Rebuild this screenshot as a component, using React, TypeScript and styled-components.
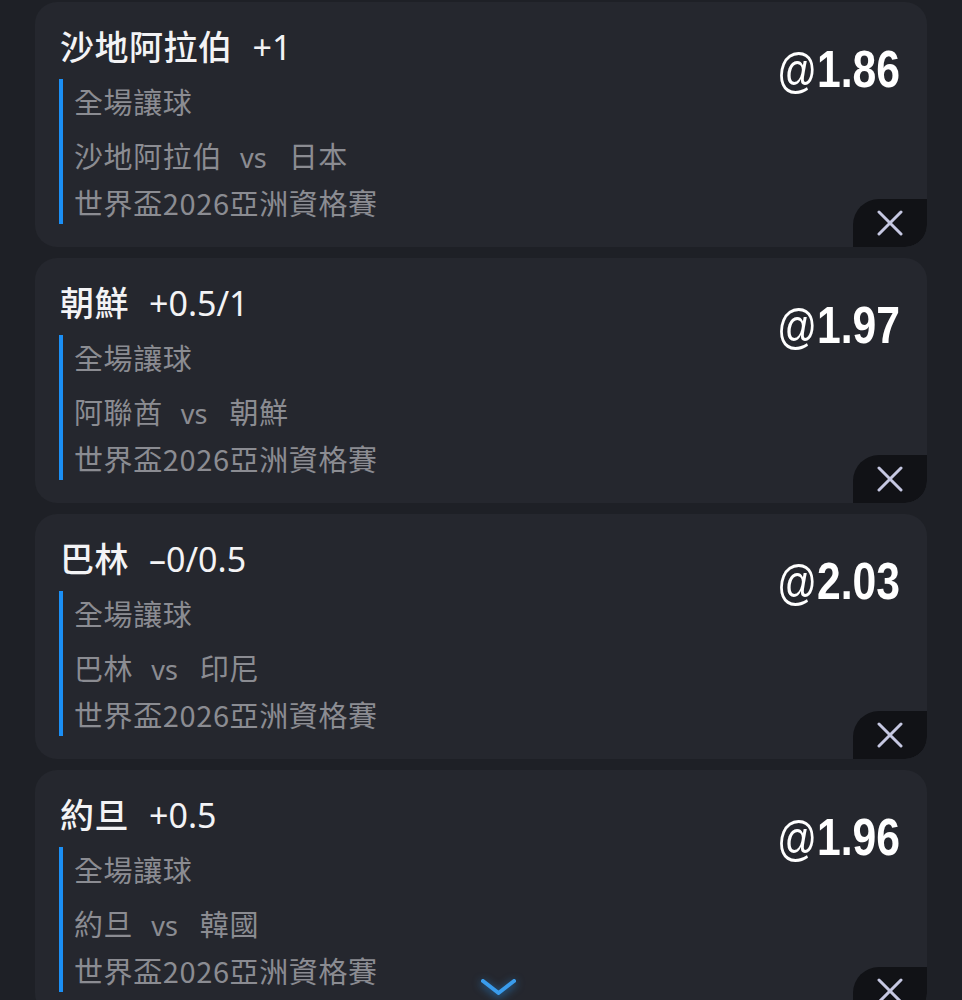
import styled, { createGlobalStyle } from "styled-components";

const GlobalStyle = createGlobalStyle`
  html, body {
    margin: 0;
    padding: 0;
    background: #1e2026;
  }
  body {
    font-family: "Noto Sans CJK TC", "Noto Sans", sans-serif;
  }
`;

const Page = styled.div`
  height: 1000px;
  overflow: hidden;
  position: relative;
  padding: 2px 35px 0 35px;
  box-sizing: border-box;
  display: flex;
  flex-direction: column;
  gap: 11px;
`;

const Card = styled.div`
  position: relative;
  flex: 0 0 auto;
  height: 245px;
  box-sizing: border-box;
  background: #25272e;
  border-radius: 22px;
  padding: 22px 27px 24px 24px;
  display: grid;
  grid-template-columns: 1fr auto;
  align-items: start;
  overflow: hidden;
`;

const Main = styled.div`
  display: flex;
  flex-direction: column;
`;

const Title = styled.div`
  color: #f3f3f5;
  font-size: 34px;
  letter-spacing: 0.5px;
  font-weight: 500;
  line-height: 44px;
  white-space: nowrap;
  padding-left: 1px;
`;

const Handicap = styled.span`
  font-family: "Noto Sans", "Noto Sans CJK TC", sans-serif;
  font-size: 34px;
  font-weight: 400;
  letter-spacing: 0;
  margin-left: 20px;
`;

const Detail = styled.div`
  margin-top: 10px;
  border-left: 4px solid #1b8ff5;
  padding-left: 11px;
  display: flex;
  flex-direction: column;
`;

const Line = styled.div<{ $gap?: number }>`
  color: #8b8c92;
  font-size: 29px;
  letter-spacing: 0.6px;
  line-height: 44px;
  margin-top: ${(p) => p.$gap ?? 0}px;
  white-space: nowrap;
`;

const Vs = styled.span`
  font-family: "Noto Sans", sans-serif;
  font-size: 27px;
  letter-spacing: 0;
  margin: 0 22px 0 18px;
`;

const Odds = styled.div`
  margin-top: 19px;
  color: #ffffff;
  font-family: "Liberation Sans", Arial, sans-serif;
  font-weight: 700;
  font-size: 52px;
  line-height: 52px;
  white-space: nowrap;
  transform: scaleX(0.82);
  transform-origin: right center;
`;

const At = styled.span`
  font-weight: 400;
  font-size: 48px;
`;

const CloseButton = styled.button`
  position: absolute;
  right: 0;
  bottom: 0;
  width: 74px;
  height: 48px;
  border: none;
  padding: 0;
  background: #111216;
  border-radius: 26px 0 22px 0;
  display: flex;
  align-items: center;
  justify-content: center;
  cursor: pointer;
`;

const Chevron = styled.div`
  position: absolute;
  left: 480px;
  top: 976px;
  width: 37px;
  height: 24px;
  filter: drop-shadow(0 2px 4px rgba(40, 150, 240, 0.7));
`;

type Bet = {
  team: string;
  line: string;
  home: string;
  away: string;
  odds: string;
};

const bets: Bet[] = [
  { team: "沙地阿拉伯", line: "+1", home: "沙地阿拉伯", away: "日本", odds: "1.86" },
  { team: "朝鮮", line: "+0.5/1", home: "阿聯酋", away: "朝鮮", odds: "1.97" },
  { team: "巴林", line: "\u20130/0.5", home: "巴林", away: "印尼", odds: "2.03" },
  { team: "約旦", line: "+0.5", home: "約旦", away: "韓國", odds: "1.96" },
];

const CloseIcon = () => (
  <svg width="26" height="26" viewBox="0 0 26 26">
    <path d="M2 2 L24 24 M24 2 L2 24" stroke="#c6c8e2" strokeWidth="3" strokeLinecap="round" />
  </svg>
);

const BetCard = ({ bet }: { bet: Bet }) => (
  <Card>
    <Main>
      <Title>
        {bet.team}
        <Handicap>{bet.line}</Handicap>
      </Title>
      <Detail>
        <Line>全場讓球</Line>
        <Line $gap={10}>
          {bet.home}
          <Vs>vs</Vs>
          {bet.away}
        </Line>
        <Line>世界盃2026亞洲資格賽</Line>
      </Detail>
    </Main>
    <Odds>
      <At>@</At>
      {bet.odds}
    </Odds>
    <CloseButton aria-label="remove">
      <CloseIcon />
    </CloseButton>
  </Card>
);

export default function App() {
  return (
    <>
      <GlobalStyle />
      <Page>
        {bets.map((b) => (
          <BetCard key={b.team} bet={b} />
        ))}
        <Chevron>
          <svg width="37" height="24" viewBox="0 0 37 24">
            <path d="M3 5 L18.5 17 L34 5" fill="none" stroke="#3a9cec" strokeWidth="4" strokeLinecap="round" strokeLinejoin="round" />
          </svg>
        </Chevron>
      </Page>
    </>
  );
}
